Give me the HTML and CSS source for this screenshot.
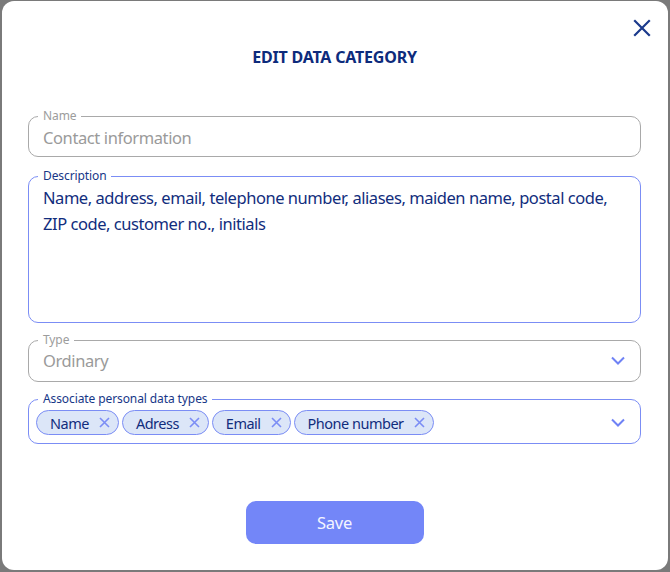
FILE: index.html
```html
<!DOCTYPE html>
<html lang="en">
<head>
<meta charset="utf-8">
<title>Edit data category</title>
<link rel="stylesheet" href="styles.css">
</head>
<body>
<div class="modal">
  <button class="close" aria-label="Close">
    <svg width="18" height="18" viewBox="0 0 18 18"><path d="M2 2 L16 16 M16 2 L2 16" stroke="#1b3a8c" stroke-width="2.2" fill="none" stroke-linecap="square"/></svg>
  </button>
  <h1 class="title">EDIT DATA CATEGORY</h1>
  <form class="form">
    <fieldset class="field field-muted field-name">
      <legend>Name</legend>
      <div class="value">Contact information</div>
    </fieldset>
    <fieldset class="field field-active field-desc">
      <legend>Description</legend>
      <div class="textarea">Name, address, email, telephone number, aliases, maiden name, postal code, ZIP code, customer no., initials</div>
    </fieldset>
    <fieldset class="field field-muted field-type">
      <legend>Type</legend>
      <div class="select">
        <span class="value">Ordinary</span>
        <svg class="chev" width="14" height="9" viewBox="0 0 14 9"><path d="M1 1.5 L7 7.5 L13 1.5" stroke="#6f82f5" stroke-width="2" fill="none"/></svg>
      </div>
    </fieldset>
    <fieldset class="field field-active field-assoc">
      <legend>Associate personal data types</legend>
      <div class="select">
        <div class="chips">
          <span class="chip">Name<svg width="11" height="11" viewBox="0 0 11 11"><path d="M1 1 L10 10 M10 1 L1 10" stroke="#7b8df5" stroke-width="1.6" fill="none"/></svg></span>
          <span class="chip">Adress<svg width="11" height="11" viewBox="0 0 11 11"><path d="M1 1 L10 10 M10 1 L1 10" stroke="#7b8df5" stroke-width="1.6" fill="none"/></svg></span>
          <span class="chip">Email<svg width="11" height="11" viewBox="0 0 11 11"><path d="M1 1 L10 10 M10 1 L1 10" stroke="#7b8df5" stroke-width="1.6" fill="none"/></svg></span>
          <span class="chip">Phone number<svg width="11" height="11" viewBox="0 0 11 11"><path d="M1 1 L10 10 M10 1 L1 10" stroke="#7b8df5" stroke-width="1.6" fill="none"/></svg></span>
        </div>
        <svg class="chev" width="14" height="9" viewBox="0 0 14 9"><path d="M1 1.5 L7 7.5 L13 1.5" stroke="#6f82f5" stroke-width="2" fill="none"/></svg>
      </div>
    </fieldset>
    <div class="actions">
      <button type="button" class="save">Save</button>
    </div>
  </form>
</div>
</body>
</html>
```
FILE: styles.css
```css
* { box-sizing: border-box; }
html, body { margin: 0; height: 100%; }
body {
  background: #7a7a7a;
  padding: 1px 2px 2px 2px;
  font-family: "Noto Sans", "Open Sans", sans-serif;
}
.modal {
  position: relative;
  background: #fff;
  height: 569px;
  border-radius: 12px;
  padding: 45px 27px 0 26px;
}
.close {
  position: absolute;
  top: 18px;
  right: 17px;
  border: 0;
  background: none;
  padding: 0;
  width: 18px;
  height: 18px;
  cursor: pointer;
}
.close svg { display: block; }
.title {
  margin: 0;
  text-align: center;
  font-size: 16px;
  line-height: 22px;
  font-weight: 700;
  letter-spacing: -0.2px;
  color: #0d2b7c;
}
.form {
  margin-top: 41px;
  display: flex;
  flex-direction: column;
  gap: 10px;
}
.field {
  margin: 0;
  padding: 0 14px 0 14px;
  border-radius: 10px;
  min-width: 0;
}
.field legend {
  font-size: 12px;
  line-height: 14px;
  padding: 0 5px;
  margin-left: -5px;
  letter-spacing: -0.1px;
}
.field-name { margin-bottom: 2px; padding-bottom: 4px; }
.field-muted { border: 1px solid #a9a9a9; }
.field-muted legend { color: #9c9c9c; }
.field-active { border: 1px solid #7b8df5; }
.field-active legend { color: #173788; }
.value {
  font-size: 16.5px;
  letter-spacing: -0.4px;
  color: #9a9a9a;
}
.field-name .value { display: block; line-height: 29px; }
.textarea {
  height: 139px;
  padding-top: 2px;
  font-size: 16.5px;
  line-height: 26px;
  letter-spacing: -0.45px;
  color: #112d7d;
}
.select {
  display: flex;
  align-items: center;
  justify-content: space-between;
}
.field-type { padding-bottom: 8px; }
.field-type .select { height: 26px; }
.field-type .chev { margin-right: 1px; }
.field-assoc { padding-left: 7px; padding-bottom: 4px; }
.field-assoc legend { margin-left: 2px; }
.field-assoc .select { height: 33px; }
.field-assoc .chev { margin-right: 1px; }
.chips {
  display: flex;
  gap: 3px;
}
.chip {
  display: inline-flex;
  align-items: center;
  gap: 10px;
  height: 25px;
  padding: 0 8px 0 13px;
  border: 1px solid #7b8df5;
  border-radius: 13px;
  background: #dce6f8;
  color: #112d7d;
  font-size: 14.5px;
  letter-spacing: -0.5px;
}
.chip svg { display: block; }
.actions {
  display: flex;
  justify-content: center;
  margin-top: 47px;
}
.save {
  width: 178px;
  height: 43px;
  border: 0;
  border-radius: 10px;
  background: #7386f8;
  color: #f3f5ff;
  font-family: "Noto Sans", "Open Sans", sans-serif;
  font-size: 16.5px;
  letter-spacing: -0.3px;
}
```
